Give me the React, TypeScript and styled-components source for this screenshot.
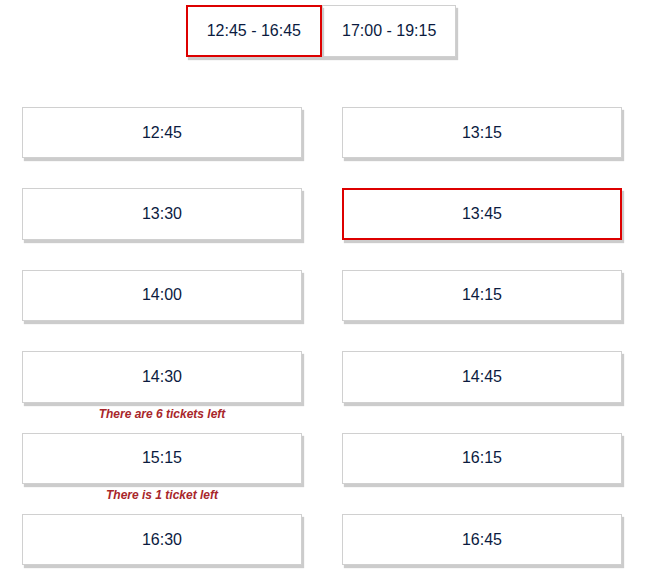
import React, { useState } from "react";
import styled, { createGlobalStyle, css } from "styled-components";

const GlobalStyle = createGlobalStyle`
  html, body {
    margin: 0;
    padding: 0;
    background: #ffffff;
  }
  body {
    font-family: "Liberation Sans", Arial, sans-serif;
  }
`;

const Page = styled.div`
  width: 644px;
  padding-top: 5px;
  box-sizing: border-box;
`;

const TabBar = styled.div`
  display: flex;
  justify-content: center;
  margin-left: -2px;
`;

const Tab = styled.button<{ $active?: boolean }>`
  height: 52px;
  padding: 0 19px;
  box-sizing: border-box;
  background: #fff;
  font-family: "Liberation Sans", Arial, sans-serif;
  font-size: 16px;
  color: #0b1b3f;
  cursor: pointer;
  border: 1px solid #d0d0d0;
  box-shadow: 2px 3px 1px #cccccc;
  ${(p) =>
    p.$active &&
    css`
      border: 2px solid #dd0000;
      position: relative;
      z-index: 1;
    `}
`;

const SlotGrid = styled.div`
  display: grid;
  grid-template-columns: 280px 280px;
  column-gap: 40px;
  grid-auto-rows: 81.4px;
  padding: 50px 22px 0;
`;

const Cell = styled.div`
  display: flex;
  flex-direction: column;
  align-items: center;
`;

const Slot = styled.button<{ $active?: boolean }>`
  width: 100%;
  height: 51.4px;
  flex: none;
  box-sizing: border-box;
  background: #fff;
  border: 1px solid #d0d0d0;
  box-shadow: 2px 3px 1px #cccccc;
  font-family: "Liberation Sans", Arial, sans-serif;
  font-size: 16px;
  color: #0b1b3f;
  cursor: pointer;
  display: flex;
  align-items: center;
  justify-content: center;
  padding: 0;
  ${(p) =>
    p.$active &&
    css`
      border: 2px solid #dd0000;
    `}
`;

const Note = styled.div`
  margin-top: 4px;
  font-family: "Liberation Sans", Arial, sans-serif;
  font-size: 12px;
  line-height: 14px;
  font-weight: bold;
  font-style: italic;
  color: #a8262a;
`;

const tabs = ["12:45 - 16:45", "17:00 - 19:15"];

const slots: { time: string; note?: string }[] = [
  { time: "12:45" },
  { time: "13:15" },
  { time: "13:30" },
  { time: "13:45" },
  { time: "14:00" },
  { time: "14:15" },
  { time: "14:30", note: "There are 6 tickets left" },
  { time: "14:45" },
  { time: "15:15", note: "There is 1 ticket left" },
  { time: "16:15" },
  { time: "16:30" },
  { time: "16:45" },
];

export default function App() {
  const [tab, setTab] = useState(0);
  const [slot, setSlot] = useState("13:45");
  return (
    <>
      <GlobalStyle />
      <Page>
        <TabBar>
          {tabs.map((t, i) => (
            <Tab key={t} $active={tab === i} onClick={() => setTab(i)}>
              {t}
            </Tab>
          ))}
        </TabBar>
        <SlotGrid>
          {slots.map((s) => (
            <Cell key={s.time}>
              <Slot $active={slot === s.time} onClick={() => setSlot(s.time)}>
                {s.time}
              </Slot>
              {s.note && <Note>{s.note}</Note>}
            </Cell>
          ))}
        </SlotGrid>
      </Page>
    </>
  );
}
